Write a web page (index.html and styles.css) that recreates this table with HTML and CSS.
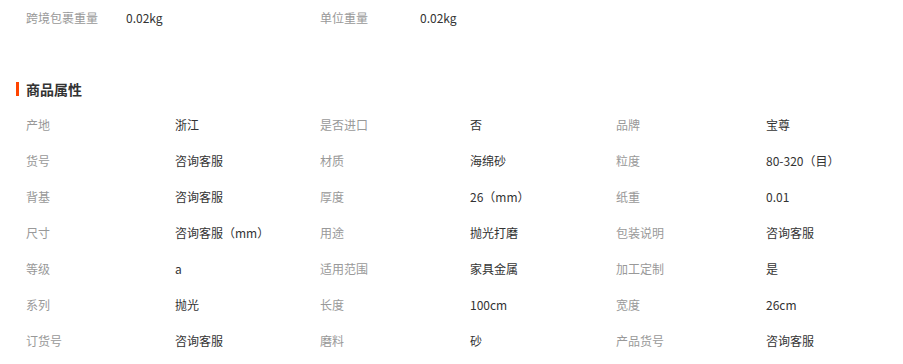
FILE: index.html
```html
<!DOCTYPE html>
<html lang="zh">
<head>
<meta charset="utf-8">
<link rel="stylesheet" href="styles.css">
</head>
<body>
<div class="page">
  <div class="top">
    <div class="pair"><span class="k">跨境包裹重量</span><span class="v">0.02kg</span></div>
    <div class="pair"><span class="k">单位重量</span><span class="v">0.02kg</span></div>
  </div>
  <h2 class="title">商品属性</h2>
  <div class="attrs">
    <span class="k">产地</span><span class="v">浙江</span><span class="k">是否进口</span><span class="v">否</span><span class="k">品牌</span><span class="v">宝尊</span>
    <span class="k">货号</span><span class="v">咨询客服</span><span class="k">材质</span><span class="v">海绵砂</span><span class="k">粒度</span><span class="v">80-320（目）</span>
    <span class="k">背基</span><span class="v">咨询客服</span><span class="k">厚度</span><span class="v">26（mm）</span><span class="k">纸重</span><span class="v">0.01</span>
    <span class="k">尺寸</span><span class="v">咨询客服（mm）</span><span class="k">用途</span><span class="v">抛光打磨</span><span class="k">包装说明</span><span class="v">咨询客服</span>
    <span class="k">等级</span><span class="v">a</span><span class="k">适用范围</span><span class="v">家具金属</span><span class="k">加工定制</span><span class="v">是</span>
    <span class="k">系列</span><span class="v">抛光</span><span class="k">长度</span><span class="v">100cm</span><span class="k">宽度</span><span class="v">26cm</span>
    <span class="k">订货号</span><span class="v">咨询客服</span><span class="k">磨料</span><span class="v">砂</span><span class="k">产品货号</span><span class="v">咨询客服</span>
  </div>
</div>
</body>
</html>
```

FILE: styles.css
```css
html, body {
  margin: 0;
  padding: 0;
  background: #fff;
}
body {
  font-family: "Microsoft YaHei", "Noto Sans CJK SC", "Liberation Sans", sans-serif;
  font-size: 12px;
  color: #333;
}
.page {
  width: 903px;
  height: 364px;
  overflow: hidden;
}
.top {
  display: flex;
  padding-left: 26px;
  height: 36px;
  line-height: 36px;
}
.top .pair {
  display: flex;
  width: 294px;
}
.top .k {
  width: 100px;
}
.k {
  color: #999;
}
.v {
  color: #333;
}
.title {
  margin: 46px 0 0 16px;
  padding-left: 7px;
  border-left: 3px solid #ff4400;
  font-size: 14px;
  font-weight: bold;
  line-height: 14px;
  height: 14px;
  color: #333;
}
.attrs {
  display: grid;
  grid-template-columns: 149px 145px 150px 146px 150px 1fr;
  grid-auto-rows: 36px;
  align-items: center;
  padding-left: 26px;
  margin-top: 11px;
}
.attrs span {
  line-height: 20px;
  white-space: nowrap;
}
```
